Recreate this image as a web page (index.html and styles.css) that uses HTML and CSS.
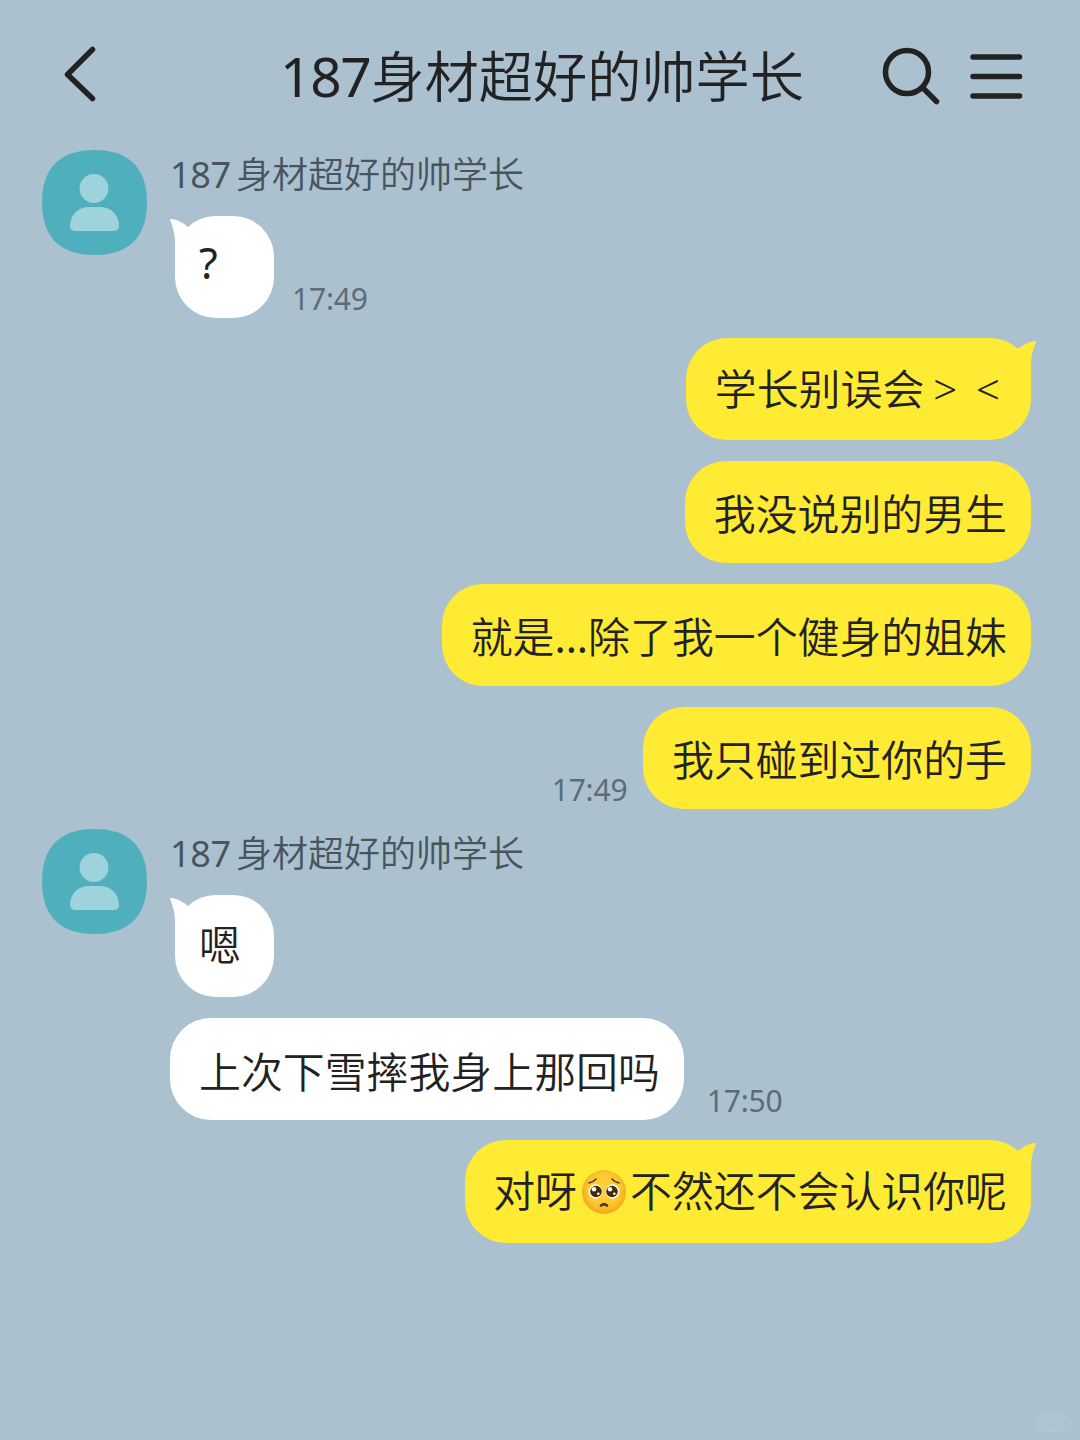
FILE: index.html
```html
<!DOCTYPE html>
<html lang="zh-CN">
<head>
    <meta charset="UTF-8">
    <meta name="viewport" content="width=device-width, initial-scale=1.0">
    <title>187身材超好的帅学长</title>
    <link rel="stylesheet" href="styles.css">
</head>
<body>
    <!-- shared shapes -->
    <svg class="defs" width="0" height="0">
        <symbol id="tail" viewBox="0 0 24 40">
            <path d="M0 1C-.2 .3 .3 0 1 0C8 .5 13 4 18 8L24 14V40H5V24C5 15 3 8 0 1Z"/>
        </symbol>
        <symbol id="avatar" viewBox="0 0 105 105">
            <path fill="#50afbd" d="M0 52.500C0 18 18 0 52.500 0S105 18 105 52.500S87 105 52.500 105S0 87 0 52.500Z"/>
            <circle cx="52" cy="38.500" r="14.400" fill="#9fd3db"/>
            <path fill="#9fd3db" d="M28 76C28 64 37 57 47 57H58C68 57 77 64 77 76Q77 81 71 81H34Q28 81 28 76Z"/>
        </symbol>
    </svg>

    <header class="topbar">
        <a class="back" href="#" aria-label="返回">
            <svg width="36" height="60" viewBox="0 0 36 60"><path d="M31.500 4.500L6.500 29.500L31.500 53.500" /></svg>
        </a>
        <h1><span class="num">187</span>身材超好的帅学长</h1>
        <div class="tools">
            <svg width="60" height="60" viewBox="0 0 60 60"><circle cx="26" cy="27" r="21.500"/><path d="M42 43L55.500 56.500"/></svg>
            <svg width="54" height="60" viewBox="0 0 54 60"><path d="M3 12H49.500M3 31.500H49.500M3 51H49.500"/></svg>
        </div>
    </header>

    <main class="chat">
        <section class="group">
            <svg class="avatar"><use href="#avatar"/></svg>
            <div class="messages">
                <div class="name"><span class="num">187</span>身材超好的帅学长</div>
                <div class="row">
                    <div class="bubble first"><svg class="tail"><use href="#tail"/></svg><span class="latin mark">?</span></div>
                    <time>17:49</time>
                </div>
            </div>
        </section>

        <section class="group mine">
            <div class="row">
                <div class="bubble first"><svg class="tail"><use href="#tail"/></svg>学长别误会<span class="face">&gt; &lt;</span></div>
            </div>
            <div class="row"><div class="bubble">我没说别的男生</div></div>
            <div class="row"><div class="bubble">就是<span class="latin">...</span>除了我一个健身的姐妹</div></div>
            <div class="row">
                <time>17:49</time>
                <div class="bubble">我只碰到过你的手</div>
            </div>
        </section>

        <section class="group">
            <svg class="avatar"><use href="#avatar"/></svg>
            <div class="messages">
                <div class="name"><span class="num">187</span>身材超好的帅学长</div>
                <div class="row">
                    <div class="bubble first"><svg class="tail"><use href="#tail"/></svg>嗯</div>
                </div>
                <div class="row">
                    <div class="bubble">上次下雪摔我身上那回吗</div>
                    <time class="far">17:50</time>
                </div>
            </div>
        </section>

        <section class="group mine">
            <div class="row">
                <div class="bubble first"><svg class="tail"><use href="#tail"/></svg>对呀<svg class="emoji" viewBox="0 0 46 46">
                    <defs>
                        <radialGradient id="skin" cx="50%" cy="45%" r="55%">
                            <stop offset="0" stop-color="#fed23f"/>
                            <stop offset=".65" stop-color="#fdc92f"/>
                            <stop offset="1" stop-color="#f2a61c"/>
                        </radialGradient>
                    </defs>
                    <circle cx="23" cy="23" r="22" fill="url(#skin)"/>
                    <ellipse cx="14.500" cy="22.500" rx="6.800" ry="7.200" fill="#fff"/>
                    <ellipse cx="31.500" cy="22.500" rx="6.800" ry="7.200" fill="#fff"/>
                    <circle cx="15" cy="22.500" r="5.800" fill="#422b0d"/>
                    <circle cx="31" cy="22.500" r="5.800" fill="#422b0d"/>
                    <circle cx="13" cy="20.300" r="2.300" fill="#fff"/>
                    <circle cx="29" cy="20.300" r="2.300" fill="#fff"/>
                    <circle cx="17.300" cy="24.800" r="1.300" fill="#fff"/>
                    <circle cx="33.300" cy="24.800" r="1.300" fill="#fff"/>
                    <path d="M8 14Q12.500 13 15 10M38 14Q33.500 13 31 10" fill="none" stroke="#533a10" stroke-width="1.500" stroke-linecap="round"/>
                    <path d="M20 36.500Q23 34 26 36.500" fill="none" stroke="#533a10" stroke-width="2.800" stroke-linecap="round"/>
                </svg>不然还不会认识你呢</div>
            </div>
        </section>
    </main>

    <div class="watermark">小红书</div>
</body>
</html>
```
FILE: styles.css
```css
* {
    box-sizing: border-box;
}

body {
    margin: 0;
    height: 1440px;
    overflow: hidden;
    position: relative;
    background-color: #abc1d0;
    color: #222;
    font-family: "Noto Sans CJK SC", sans-serif;
    font-weight: 350;
}

svg {
    display: block;
}

.defs {
    position: absolute;
}

.topbar {
    display: grid;
    grid-template-columns: 219px 1fr 220px;
    align-items: center;
    height: 150px;
    padding: 0 59px 0 61px;
}

.topbar svg {
    fill: none;
    stroke: #222;
    stroke-width: 5.5;
    stroke-linecap: round;
    stroke-linejoin: round;
}

.topbar h1 {
    margin: 0;
    font-size: 54.200px;
    font-weight: 350;
    line-height: 80px;
    white-space: nowrap;
}

.num,
.latin,
time {
    font-family: "Noto Sans", sans-serif;
    font-weight: 400;
}

h1 .num {
    font-size: 55px;
    letter-spacing: -1.300px;
}

.tools {
    display: flex;
    justify-content: flex-end;
    gap: 29px;
}

.chat {
    padding: 0 49px 0 42px;
}

.group {
    display: flex;
    margin-bottom: 20px;
}

.avatar {
    width: 105px;
    height: 105px;
    margin-right: 23px;
}

.messages,
.mine {
    display: flex;
    flex-direction: column;
}

.mine {
    gap: 21px;
    align-items: flex-end;
}

.messages {
    gap: 21px;
}

.name {
    height: 50px;
    margin-bottom: -5.500px;
    color: #48555e;
    font-size: 36px;
    line-height: 45px;
}

.name .num {
    margin-right: 5px;
    letter-spacing: -.3px;
}

.row {
    display: flex;
    align-items: flex-end;
}

.bubble {
    position: relative;
    height: 102.200px;
    padding: 0 24px 0 29px;
    border-radius: 41px;
    background-color: #fff;
    font-size: 41.900px;
    line-height: 102px;
    white-space: nowrap;
}

.bubble.first {
    line-height: 97px;
}

.messages .bubble {
    line-height: 103px;
}

.messages .bubble.first {
    width: 99px;
    margin-left: 5px;
    padding-left: 24px;
    line-height: 95px;
}

.mine .bubble {
    padding-left: 28.500px;
    background-color: #ffea34;
}

/* little horn on the first bubble of a group */
.tail {
    position: absolute;
    left: -5px;
    top: 3px;
    width: 24px;
    height: 40px;
    fill: #fff;
}

.mine .tail {
    left: auto;
    right: -5px;
    fill: #ffea34;
    transform: scaleX(-1);
}

.mark {
    font-size: 43px;
    line-height: 1;
    vertical-align: 3px;
}

.face {
    margin: 0 7px 0 9px;
    font-family: "Noto Sans", sans-serif;
    word-spacing: 8px;
}

.emoji {
    display: inline-block;
    width: 46px;
    height: 46px;
    margin: 0 3px 0 4px;
    vertical-align: -8px;
}

time {
    margin: 0 16px 0 18px;
    color: #5d6c76;
    font-size: 30px;
    line-height: 38px;
    letter-spacing: -.2px;
}

time.far {
    margin-left: 23px;
}

.watermark {
    position: absolute;
    right: 8px;
    bottom: 8px;
    width: 37px;
    border-radius: 9px;
    background-color: #b0c5d3;
    color: #a9bfce;
    font-size: 10px;
    line-height: 18px;
    text-align: center;
}
```
